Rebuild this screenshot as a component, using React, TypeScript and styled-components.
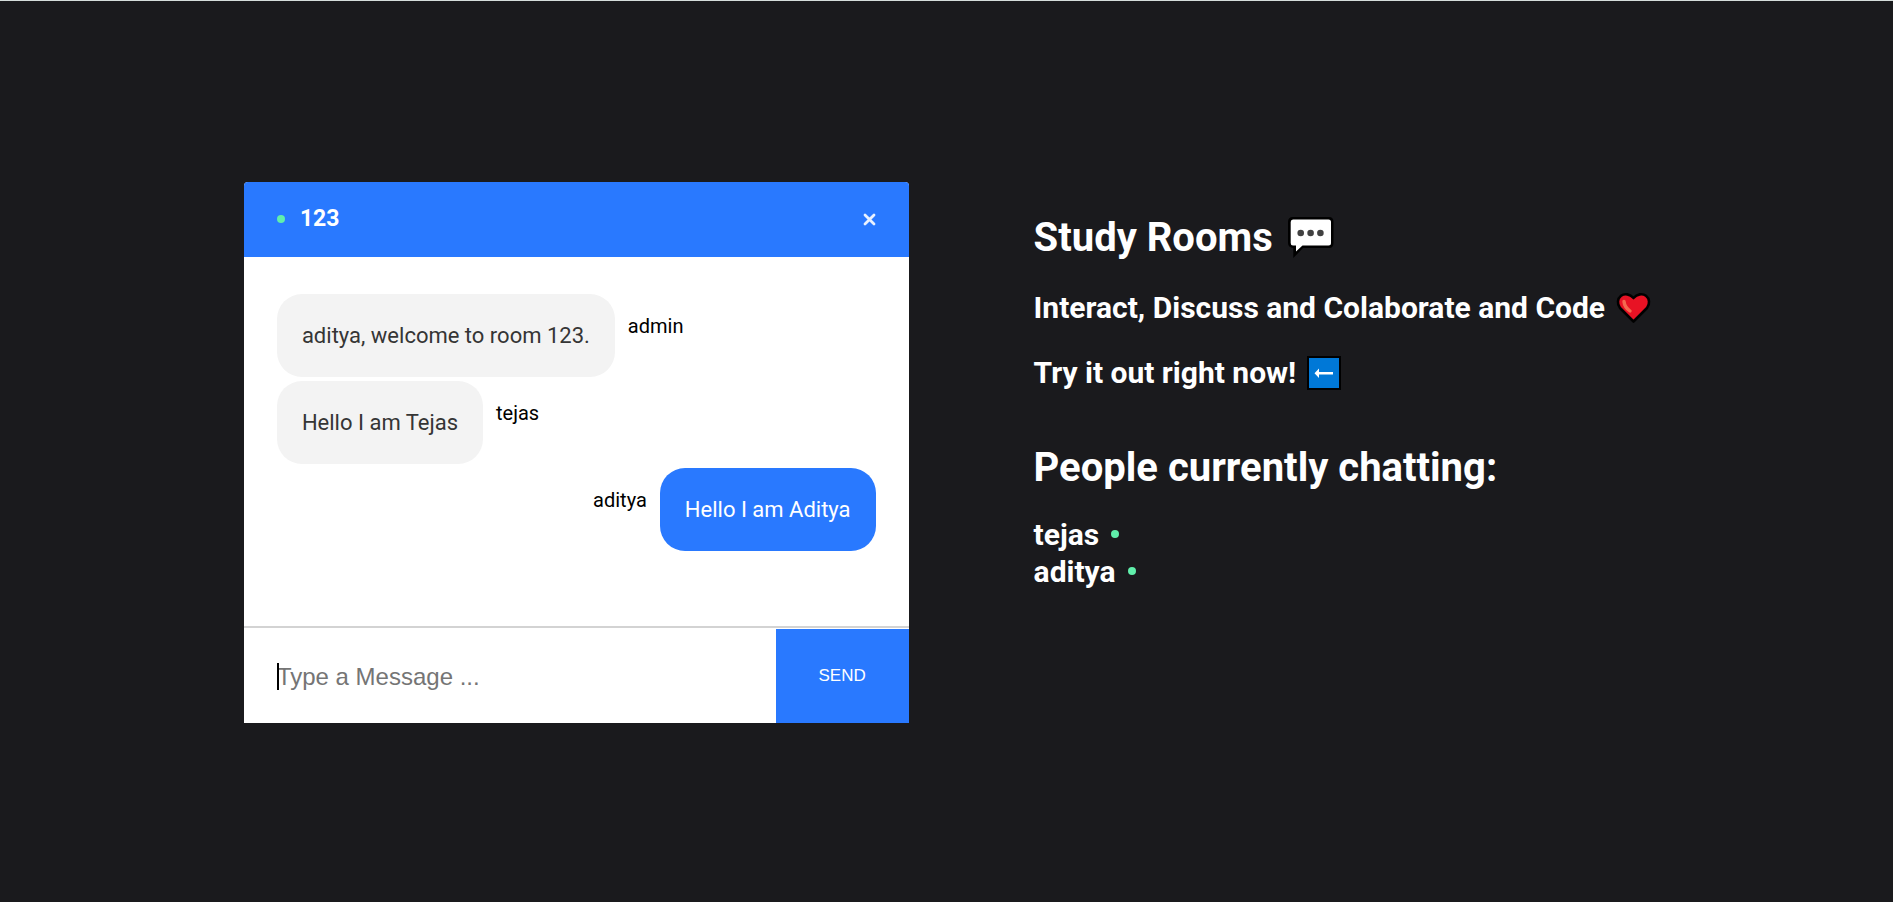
import React from "react";
import styled, { createGlobalStyle } from "styled-components";

const GlobalStyle = createGlobalStyle`
  * { box-sizing: border-box; }
  body {
    margin: 0;
    background: #1a1a1d;
    font-family: Roboto, "Liberation Sans", sans-serif;
    font-size: 20px;
  }
  h1, h2, p, ul { margin: 0; padding: 0; }
`;

const Page = styled.main`
  display: flex;
  justify-content: center;
  align-items: center;
  min-height: 100vh;
  padding: 2px 0 0 2px;
  border-top: 1px solid #d5dddb;
  background: #1a1a1d;
`;

const Columns = styled.div`
  display: flex;
  justify-content: center;
  width: 100%;
  min-height: 60vh;
`;

const ChatCard = styled.section`
  display: flex;
  flex-direction: column;
  flex: none;
  width: 35.15%;
  background: #fff;
  border-radius: 4px 4px 0 0;
`;

const InfoBar = styled.header`
  display: flex;
  align-items: center;
  justify-content: space-between;
  height: 75px;
  padding: 0 33px;
  background: #2979ff;
  border-radius: 4px 4px 0 0;
  color: #fff;
`;

const RoomTitle = styled.div`
  display: flex;
  align-items: center;
  gap: 15px;
`;

const RoomName = styled.h2`
  font-size: 23px;
  line-height: 28px;
  font-weight: 700;
`;

const OnlineDot = styled.span`
  flex: none;
  width: 8px;
  height: 8px;
  border-radius: 50%;
  background: #60efab;
`;

const CloseLink = styled.a`
  display: flex;
  color: #fff;
`;

const Messages = styled.div`
  display: flex;
  flex: 1;
  flex-direction: column;
  gap: 4px;
  padding: 37px 33px;
`;

const MessageRow = styled.div<{ $own?: boolean }>`
  display: flex;
  flex-direction: ${(p) => (p.$own ? "row-reverse" : "row")};
  gap: 13px;
`;

const Bubble = styled.p<{ $own?: boolean }>`
  padding: 28px 25px;
  border-radius: 25px;
  background: ${(p) => (p.$own ? "#2979ff" : "#f3f3f3")};
  color: ${(p) => (p.$own ? "#fff" : "#353535")};
  font-size: 22px;
  line-height: 27px;
`;

const Sender = styled.p`
  padding-top: 20px;
  color: #000;
  font-size: 20px;
  line-height: 24px;
`;

const Composer = styled.form`
  display: flex;
  height: 97px;
  border-top: 2px solid #d3d3d3;
`;

const Field = styled.label`
  display: flex;
  align-items: center;
  width: 80%;
  padding: 2px 0 0 33px;
`;

const Caret = styled.span`
  flex: none;
  width: 2px;
  height: 27px;
  margin-right: -2px;
  background: #000;
  z-index: 1;
`;

const MessageInput = styled.input`
  flex: 1;
  min-width: 0;
  padding: 0;
  border: 0;
  outline: 0;
  background: transparent;
  font-family: "Liberation Sans", Arial, sans-serif;
  font-size: 24px;
  &::placeholder { color: #757575; }
`;

const SendButton = styled.button`
  width: 20%;
  margin-top: 1px;
  border: 0;
  padding: 0;
  background: #2979ff;
  color: #fff;
  font-family: "Liberation Sans", Arial, sans-serif;
  font-size: 17px;
`;

const Aside = styled.aside`
  flex: none;
  margin-left: 125px;
  padding-top: 32px;
  color: #fff;
`;

const Title = styled.h1`
  display: flex;
  align-items: center;
  gap: 15px;
  font-size: 40px;
  line-height: 47px;
`;

const Tagline = styled.h2`
  display: flex;
  align-items: center;
  gap: 11px;
  margin-top: 29px;
  font-size: 30px;
  line-height: 36px;
`;

const PeopleTitle = styled(Title)`
  margin-top: 53px;
`;

const People = styled.ul`
  margin-top: 25px;
  list-style: none;
  font-size: 30px;
  font-weight: 700;
  line-height: 37px;
`;

const Person = styled.li`
  display: flex;
  align-items: center;
  gap: 12px;
`;

const SpeechIcon = () => (
  <svg width="46" height="41" viewBox="0 0 46 41" aria-hidden="true">
    <path
      d="M5 0H41Q45.5 0 45.5 5V26Q45.5 31 41 31H15L5.3 41V31Q0 30.500 0 26V5Q0 0 5 0Z"
      fill="#000"
    />
    <path d="M5 2.500H40.500Q43 2.500 43 5V26Q43 28.500 40.500 28.500H14.500L8 34.500V28.500H5Q2.700 28.500 2.700 26V5Q2.700 2.500 5 2.500Z" fill="#fff" />
    <circle cx="12.700" cy="16" r="3.300" fill="#414141" />
    <circle cx="22.600" cy="16" r="3.300" fill="#414141" />
    <circle cx="32.400" cy="16" r="3.300" fill="#414141" />
  </svg>
);

const HeartIcon = () => (
  <svg width="35" height="32" viewBox="0 0 35 32" aria-hidden="true">
    <path
      d="M17.500 29.500L4 16C0.800 12 1.500 6.500 5 3.800C8.700 1 14 2 17.500 6C21 2 26.300 1 30 3.800C33.500 6.500 34.200 12 31 16Z"
      fill="#e81224"
      stroke="#000"
      strokeWidth="2.600"
      strokeLinejoin="round"
    />
    <path d="M8 9.500Q8.500 15 14 19" fill="none" stroke="#f4694f" strokeWidth="3.400" strokeLinecap="round" />
  </svg>
);

const ArrowIcon = () => (
  <svg width="34" height="34" viewBox="0 0 34 34" aria-hidden="true">
    <rect width="34" height="34" fill="#000" />
    <rect x="2" y="2" width="30" height="30" fill="#0078d7" />
    <path d="M7.500 17.200L12 12.500V16H26V18.500H12V22Z" fill="#fff" />
  </svg>
);

const CloseIcon = () => (
  <svg width="13" height="13" viewBox="0 0 13 13" aria-hidden="true">
    <path d="M2 2L11 11M11 2L2 11" stroke="#fff" strokeOpacity="0.900" strokeWidth="2.800" strokeLinecap="round" />
  </svg>
);

const messages = [
  { user: "admin", text: "aditya, welcome to room 123.", own: false },
  { user: "tejas", text: "Hello I am Tejas", own: false },
  { user: "aditya", text: "Hello I am Aditya", own: true },
];

const people = ["tejas", "aditya"];

export default function App() {
  return (
    <>
      <GlobalStyle />
      <Page>
        <Columns>
          <ChatCard>
            <InfoBar>
              <RoomTitle>
                <OnlineDot />
                <RoomName>123</RoomName>
              </RoomTitle>
              <CloseLink href="/" aria-label="Leave room">
                <CloseIcon />
              </CloseLink>
            </InfoBar>
            <Messages>
              {messages.map((m) => (
                <MessageRow key={m.text} $own={m.own}>
                  <Bubble $own={m.own}>{m.text}</Bubble>
                  <Sender>{m.user}</Sender>
                </MessageRow>
              ))}
            </Messages>
            <Composer onSubmit={(e) => e.preventDefault()}>
              <Field>
                <Caret />
                <MessageInput type="text" placeholder="Type a Message ..." aria-label="Message" />
              </Field>
              <SendButton type="submit">SEND</SendButton>
            </Composer>
          </ChatCard>
          <Aside>
            <Title>
              Study Rooms <SpeechIcon />
            </Title>
            <Tagline>
              Interact, Discuss and Colaborate and Code <HeartIcon />
            </Tagline>
            <Tagline>
              Try it out right now! <ArrowIcon />
            </Tagline>
            <PeopleTitle>People currently chatting:</PeopleTitle>
            <People>
              {people.map((name) => (
                <Person key={name}>
                  {name}
                  <OnlineDot />
                </Person>
              ))}
            </People>
          </Aside>
        </Columns>
      </Page>
    </>
  );
}
